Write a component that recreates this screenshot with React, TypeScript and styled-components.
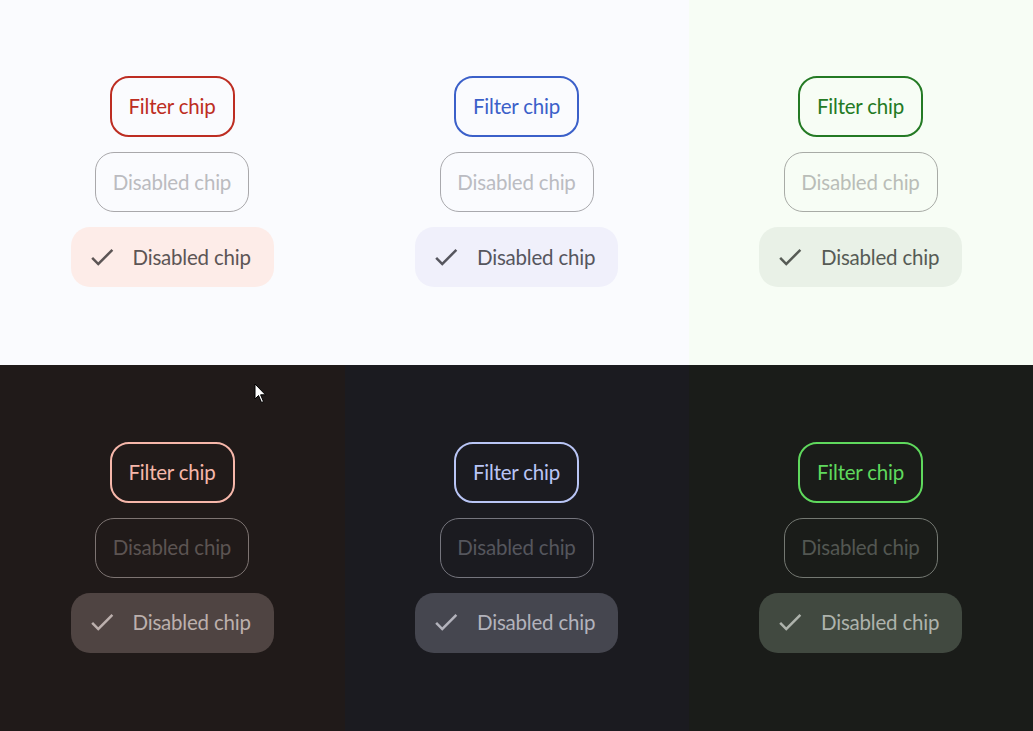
import React from "react";
import styled, { createGlobalStyle } from "styled-components";

const Global = createGlobalStyle`
  html, body { margin: 0; padding: 0; }
  body { font-family: "Lato", "Open Sans", sans-serif; }
`;

type Theme = {
  bg: string;
  primary: string;
  disabledBorder: string;
  disabledText: string;
  selBg: string;
  selText: string;
};

const themes: Theme[] = [
  { bg: "#fafbfe", primary: "#bd2d22", disabledBorder: "#a9a8ab", disabledText: "#bbbbc0", selBg: "#fdece8", selText: "#5c5555" },
  { bg: "#fafbfe", primary: "#3b60c9", disabledBorder: "#a9a9ad", disabledText: "#bbbcc2", selBg: "#f0f0fb", selText: "#56565e" },
  { bg: "#f7fdf5", primary: "#247a24", disabledBorder: "#a8aba6", disabledText: "#babdb8", selBg: "#e9f1e7", selText: "#565b55" },
  { bg: "#201a19", primary: "#f6b7aa", disabledBorder: "#7d7472", disabledText: "#5c5452", selBg: "#4f4442", selText: "#bcb0ad" },
  { bg: "#1b1b20", primary: "#b9c5f5", disabledBorder: "#75757d", disabledText: "#55565d", selBg: "#45464f", selText: "#b3b3bc" },
  { bg: "#1a1c19", primary: "#5fd95d", disabledBorder: "#747872", disabledText: "#535752", selBg: "#414940", selText: "#aeb3ac" },
];

const Page = styled.div`
  position: relative;
  width: 1033px;
  height: 731px;
  display: grid;
  grid-template-columns: 345px 344px 344px;
  grid-template-rows: 365px 366px;
  overflow: hidden;
`;

const Cell = styled.div<{ $bg: string }>`
  box-sizing: border-box;
  background: ${(p) => p.$bg};
  display: flex;
  flex-direction: column;
  align-items: center;
  justify-content: center;
  gap: 15px;
  padding: 0 1px 2px 0;
`;

const ChipBase = styled.div`
  box-sizing: border-box;
  height: 60px;
  border-radius: 19px;
  display: flex;
  align-items: center;
  justify-content: center;
  font-size: 20.5px;
  letter-spacing: -0.2px;
  white-space: nowrap;
  padding-bottom: 1px;
`;

const FilterChip = styled(ChipBase)<{ $c: string }>`
  width: 125px;
  height: 61px;
  border: 2px solid ${(p) => p.$c};
  color: ${(p) => p.$c};
`;

const DisabledChip = styled(ChipBase)<{ $b: string; $t: string }>`
  width: 154px;
  border: 1.5px solid ${(p) => p.$b};
  color: ${(p) => p.$t};
`;

const SelectedChip = styled(ChipBase)<{ $bg: string; $t: string }>`
  width: 203px;
  justify-content: flex-start;
  padding-left: 16px;
  gap: 16px;
  background: ${(p) => p.$bg};
  color: ${(p) => p.$t};
`;

const Cursor = styled.svg`
  position: absolute;
  left: 254px;
  top: 383px;
  pointer-events: none;
`;

const Check = ({ color }: { color: string }) => (
  <svg width="30" height="30" viewBox="0 0 24 24">
    <path d="M9 16.17L4.83 12l-1.42 1.41L9 19 21 7l-1.41-1.41z" fill={color} />
  </svg>
);

export default function App() {
  return (
    <>
      <Global />
      <Page>
        {themes.map((t, i) => (
          <Cell key={i} $bg={t.bg}>
            <FilterChip $c={t.primary}>Filter chip</FilterChip>
            <DisabledChip $b={t.disabledBorder} $t={t.disabledText}>
              Disabled chip
            </DisabledChip>
            <SelectedChip $bg={t.selBg} $t={t.selText}>
              <Check color={t.selText} />
              <span>Disabled chip</span>
            </SelectedChip>
          </Cell>
        ))}
        <Cursor width="14" height="22" viewBox="0 0 14 22">
          <path d="M1 1 L1 16 L4.5 12.5 L7.5 19.5 L9.5 18.6 L6.6 11.8 L11.5 11.8 Z" fill="#fff" stroke="#000" strokeWidth="1" />
        </Cursor>
      </Page>
    </>
  );
}
